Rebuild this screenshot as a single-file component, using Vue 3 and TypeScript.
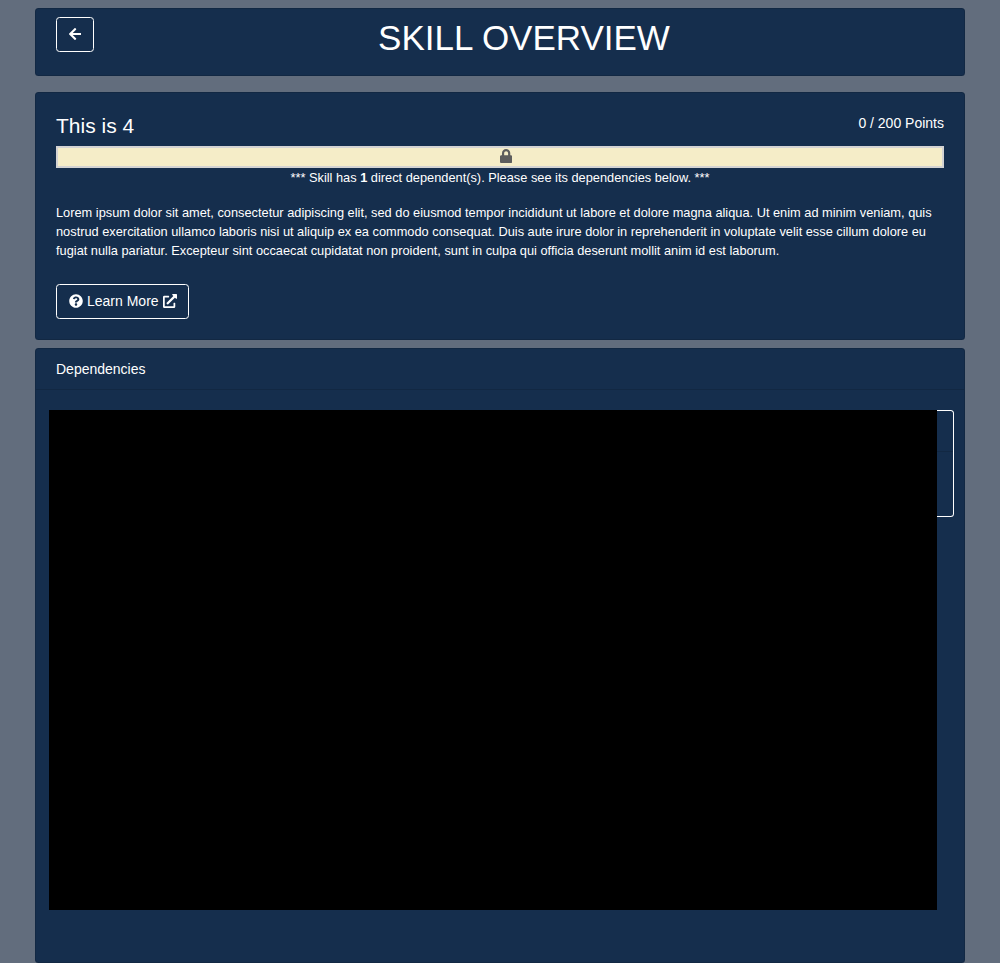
<script setup lang="ts">
const earned: number = 0
const total: number = 200
const dependents: number = 1
const description: string[] = [
  'Lorem ipsum dolor sit amet, consectetur adipiscing elit, sed do eiusmod tempor incididunt ut labore et dolore magna aliqua. Ut enim ad minim veniam, quis',
  'nostrud exercitation ullamco laboris nisi ut aliquip ex ea commodo consequat. Duis aute irure dolor in reprehenderit in voluptate velit esse cillum dolore eu',
  'fugiat nulla pariatur. Excepteur sint occaecat cupidatat non proident, sunt in culpa qui officia deserunt mollit anim id est laborum.',
]
</script>

<template>
  <main class="page">
    <header class="card title-card">
      <button class="btn back" aria-label="Back">
        <svg class="icon" viewBox="0 0 448 512" width="12.25" height="14"><path d="M257.500 445.100l-22.200 22.200c-9.400 9.400-24.600 9.400-33.900 0L7 273c-9.400-9.400-9.400-24.600 0-33.900L201.400 44.700c9.400-9.400 24.600-9.400 33.900 0l22.200 22.200c9.500 9.500 9.300 25-.4 34.300L136.600 216H424c13.300 0 24 10.700 24 24v32c0 13.300-10.700 24-24 24H136.600l120.500 114.800c9.800 9.300 10 24.800.4 34.300z" /></svg>
      </button>
      <h1>SKILL OVERVIEW</h1>
    </header>

    <section class="card skill">
      <div class="skill-head">
        <h4>This is 4</h4>
        <span class="points">{{ earned }} / {{ total }} Points</span>
      </div>
      <div class="bar">
        <svg class="icon" viewBox="0 0 448 512" width="12.25" height="14"><path d="M400 224h-24v-72C376 68.200 307.800 0 224 0S72 68.200 72 152v72H48c-26.500 0-48 21.500-48 48v192c0 26.500 21.500 48 48 48h352c26.500 0 48-21.500 48-48V272c0-26.500-21.500-48-48-48zm-104 0H152v-72c0-39.700 32.300-72 72-72s72 32.300 72 72v72z" /></svg>
      </div>
      <p class="note">*** Skill has <b>{{ dependents }}</b> direct dependent(s). Please see its dependencies below. ***</p>
      <p class="description"><span v-for="line in description" :key="line">{{ line }}</span></p>
      <button class="btn learn">
        <svg class="icon" viewBox="0 0 512 512" width="14" height="14"><path d="M504 256c0 137-111 248-248 248S8 393 8 256C8 119.100 119 8 256 8s248 111.100 248 248zM262.700 90c-54.500 0-89.300 23-116.500 63.800-3.500 5.300-2.400 12.400 2.700 16.300l34.700 26.300c5.200 3.900 12.600 3 16.700-2.100 17.900-22.700 30.100-35.800 57.300-35.800 20.400 0 45.700 13.100 45.700 33 0 15-12.400 22.700-32.500 34C247.100 238.500 216 254.900 216 296v4c0 6.600 5.400 12 12 12h56c6.600 0 12-5.400 12-12v-1.300c0-28.500 83.200-29.600 83.200-106.700 0-58-60.200-102-116.500-102zM256 338c-25.400 0-46 20.600-46 46s20.600 46 46 46 46-20.600 46-46-20.600-46-46-46z" /></svg>
        <span>Learn More</span>
        <svg class="icon" viewBox="0 0 512 512" width="14" height="14"><path d="M432 320H400a16 16 0 0 0-16 16V448H64V128H208a16 16 0 0 0 16-16V80a16 16 0 0 0-16-16H48A48 48 0 0 0 0 112V464a48 48 0 0 0 48 48H400a48 48 0 0 0 48-48V336A16 16 0 0 0 432 320ZM488 0H360c-21.370 0-32.050 25.910-17 41l35.730 35.730L135 320.370a24 24 0 0 0 0 34L157.670 377a24 24 0 0 0 34 0L435.280 133.320 471 169c15 15 41 4.500 41-17V24A24 24 0 0 0 488 0Z" /></svg>
      </button>
    </section>

    <section class="card dependencies">
      <div class="card-header">Dependencies</div>
      <div class="graph">
        <div class="canvas"></div>
        <div class="legend"><div class="legend-header"></div></div>
      </div>
    </section>
  </main>
</template>

<style>
body {
  background: #626d7d;
}
</style>

<style scoped>
* {
  box-sizing: border-box;
}
.page {
  height: 963px;
  padding: 8px 35px 0;
  display: flex;
  flex-direction: column;
  font: 14px/21px "Liberation Sans", Arial, sans-serif;
  color: #fff;
  overflow: hidden;
}
.card {
  background: #152e4d;
  border: 1px solid rgba(0, 0, 0, 0.125);
  border-radius: 3.5px;
}
h1,
h4,
p {
  margin: 0;
  font-weight: 400;
}
.icon {
  display: block;
  fill: currentColor;
  flex: none;
  margin-bottom: 2px;
}
.btn {
  height: 35px;
  padding: 0 12px;
  display: flex;
  align-items: center;
  font: inherit;
  color: #fff;
  background: transparent;
  border: 1px solid #fff;
  border-radius: 3.5px;
}
.title-card {
  height: 68px;
  padding: 8px 20px 0;
  display: flex;
  align-items: flex-start;
}
.back {
  width: 38px;
  justify-content: center;
}
h1 {
  flex: 1;
  padding-left: 10px;
  font-size: 35px;
  line-height: 42px;
  text-align: center;
}
.skill {
  height: 248px;
  margin-top: 16px;
  padding: 20px 20px 0;
}
.skill-head {
  height: 33px;
  display: flex;
  justify-content: space-between;
}
h4 {
  font-size: 21px;
  line-height: 25px;
}
.points {
  line-height: 21px;
}
.bar {
  height: 22px;
  padding-left: 12px;
  display: flex;
  align-items: center;
  justify-content: center;
  color: #5d5d5d;
  background: #f5edc8;
  border: 2px solid #d3d3d3;
}
.note {
  font-size: 12.8px;
  line-height: 19px;
  text-align: center;
}
.description {
  margin-top: 16px;
  font-size: 12.8px;
  line-height: 19px;
}
.description span {
  display: block;
  white-space: nowrap;
}
.learn {
  margin-top: 24px;
  width: 133px;
  gap: 4px;
}
.learn span {
  white-space: nowrap;
}
.dependencies {
  height: 615px;
  margin-top: 8px;
}
.card-header {
  height: 41px;
  padding: 10px 20px;
  border-bottom: 1px solid rgba(0, 0, 0, 0.125);
}
.graph {
  display: flex;
  align-items: flex-start;
  padding: 20px 0 0 13px;
}
.canvas {
  width: 888px;
  height: 500px;
  background: #000;
}
.legend {
  width: 17px;
  height: 107px;
  border: 1px solid #fff;
  border-left: 0;
  border-radius: 0 3.5px 3.5px 0;
}
.legend-header {
  height: 41px;
  border-bottom: 1px solid rgba(0, 0, 0, 0.125);
}
</style>
